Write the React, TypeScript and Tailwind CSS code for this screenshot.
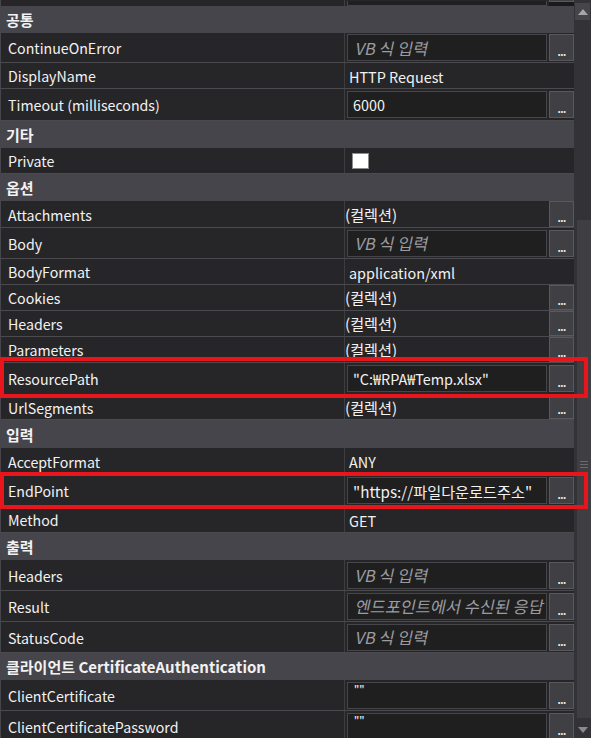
import React from "react";

type Value =
  | { type: "box"; text: string; placeholder?: boolean; small?: boolean; ko?: boolean }
  | { type: "text"; text: string }
  | { type: "collection" }
  | { type: "checkbox" };

type Row =
  | { kind: "header"; text: React.ReactNode; h: number }
  | { kind: "prop"; name: string; h: number; value: Value; button?: boolean };

const rows: Row[] = [
  { kind: "header", text: "공통", h: 27 },
  { kind: "prop", name: "ContinueOnError", h: 30, value: { type: "box", text: "VB 식 입력", placeholder: true }, button: true },
  { kind: "prop", name: "DisplayName", h: 26, value: { type: "text", text: "HTTP Request" } },
  { kind: "prop", name: "Timeout (milliseconds)", h: 32, value: { type: "box", text: "6000" }, button: true },
  { kind: "header", text: "기타", h: 27 },
  { kind: "prop", name: "Private", h: 26, value: { type: "checkbox" } },
  { kind: "header", text: "옵션", h: 27 },
  { kind: "prop", name: "Attachments", h: 27, value: { type: "collection" }, button: true },
  { kind: "prop", name: "Body", h: 31, value: { type: "box", text: "VB 식 입력", placeholder: true }, button: true },
  { kind: "prop", name: "BodyFormat", h: 26, value: { type: "text", text: "application/xml" } },
  { kind: "prop", name: "Cookies", h: 26, value: { type: "collection" }, button: true },
  { kind: "prop", name: "Headers", h: 26, value: { type: "collection" }, button: true },
  { kind: "prop", name: "Parameters", h: 26, value: { type: "collection" }, button: true },
  { kind: "prop", name: "ResourcePath", h: 32, value: { type: "box", text: "\"C:₩RPA₩Temp.xlsx\"" }, button: true },
  { kind: "prop", name: "UrlSegments", h: 25, value: { type: "collection" }, button: true },
  { kind: "header", text: "입력", h: 28 },
  { kind: "prop", name: "AcceptFormat", h: 27, value: { type: "text", text: "ANY" } },
  { kind: "prop", name: "EndPoint", h: 32, value: { type: "box", text: "\"https://파일다운로드주소\"", ko: true }, button: true },
  { kind: "prop", name: "Method", h: 26, value: { type: "text", text: "GET" } },
  { kind: "header", text: "출력", h: 27 },
  { kind: "prop", name: "Headers", h: 31, value: { type: "box", text: "VB 식 입력", placeholder: true }, button: true },
  { kind: "prop", name: "Result", h: 31, value: { type: "box", text: "엔드포인트에서 수신된 응답", placeholder: true }, button: true },
  { kind: "prop", name: "StatusCode", h: 31, value: { type: "box", text: "VB 식 입력", placeholder: true }, button: true },
  {
    kind: "header",
    text: (
      <>
        클라이언트 <span>CertificateAuthentication</span>
      </>
    ),
    h: 27,
  },
  { kind: "prop", name: "ClientCertificate", h: 31, value: { type: "box", text: "\"\"", small: true }, button: true },
  { kind: "prop", name: "ClientCertificatePassword", h: 31, value: { type: "box", text: "\"\"", small: true }, button: true },
];

function DotsButton({ full }: { full?: boolean }) {
  return (
    <div
      className={`w-[25px] shrink-0 bg-[#3f3f44] border border-[#58585d] flex items-end justify-center pb-[3px] ${
        full ? "self-stretch" : "h-[27px]"
      }`}
    >
      <span className="text-[10px] leading-none text-[#f0f0f0] font-bold tracking-[-0.5px]">...</span>
    </div>
  );
}

function ValueCell({ value, button }: { value: Value; button?: boolean }) {
  if (value.type === "text") {
    return (
      <div className="flex-1 flex items-center pl-[4px] text-[14.4px] text-[#f2f2f2] pt-[2px]">{value.text}</div>
    );
  }
  if (value.type === "checkbox") {
    return (
      <div className="flex-1 flex items-center pl-[7px]">
        <div className="w-[17px] h-[16px] bg-white border border-[#8c8c8c]" />
      </div>
    );
  }
  if (value.type === "collection") {
    return (
      <div className="flex-1 flex items-stretch">
        <div className="w-[204px] flex items-center text-[15.2px] text-[#f2f2f2] whitespace-nowrap overflow-hidden">
          (컬렉션)
        </div>
        <DotsButton full />
      </div>
    );
  }
  return (
    <div className="flex-1 flex items-center">
      <div
        className={`ml-[2px] w-[200px] h-[27px] bg-[#1f1f20] border border-[#46464a] flex overflow-hidden whitespace-nowrap ${
          value.small ? "items-start pt-[1px] pl-[6px]" : "items-center"
        } ${value.placeholder ? "pl-[8px]" : value.small ? "" : "pl-[5px]"}`}
      >
        {value.small ? (
          <span className="text-[9px] leading-none text-[#e0e0e0] font-bold">{value.text}</span>
        ) : value.placeholder ? (
          <span className="inline-block -skew-x-12 text-[16.4px] text-[#9c9ca0] pt-[1px]">{value.text}</span>
        ) : (
          <span className={`${value.ko ? "text-[15.2px]" : "text-[14.4px]"} text-[#f2f2f2] pt-[1px]`}>{value.text}</span>
        )}
      </div>
      {button && (
        <div className="ml-[2px] flex">
          <DotsButton />
        </div>
      )}
    </div>
  );
}

export default function App() {
  return (
    <div className="relative w-[591px] h-[738px] overflow-hidden bg-[#46454b] flex font-['Noto_Sans_CJK_KR',sans-serif]">
      <div className="w-[574px] flex flex-col pl-[1px] shrink-0">
        {/* partially visible row on top */}
        <div className="h-[6px] flex bg-[#262628] shrink-0">
          <div className="w-[344px] border-r border-[#3d3d41]" />
          <div className="flex-1 flex items-end">
            <div className="ml-[2px] w-[200px] h-[5px] bg-[#1f1f20] border-x border-b border-[#46464a]" />
            <div className="ml-[2px] w-[25px] h-[6px] flex flex-col">
              <div className="h-[2px] bg-[#3f3f44] border-x border-b border-[#58585d]" />
              <div className="flex-1 bg-[#1a1a1b]" />
            </div>
          </div>
        </div>
        {rows.map((r, i) =>
          r.kind === "header" ? (
            <div
              key={i}
              style={{ height: r.h }}
              className="shrink-0 flex items-center pl-[5px] pt-[2px] text-[15px] font-bold text-[#f2f2f2] bg-[#46454b]"
            >
              <span>{r.text}</span>
            </div>
          ) : (
            <div
              key={i}
              style={{ height: r.h }}
              className="shrink-0 flex bg-[#262628] border-b border-[#4a4a4f]"
            >
              <div className="w-[344px] shrink-0 border-r border-[#3d3d41] flex items-center pl-[7px] pt-[3px] text-[14.2px] text-[#f2f2f2] whitespace-nowrap">
                {r.name}
              </div>
              <ValueCell value={r.value} button={r.button} />
            </div>
          )
        )}
      </div>

      {/* scrollbar */}
      <div className="w-[17px] shrink-0 bg-[#333337] flex flex-col">
        <div className="h-[3px]" />
        <div className="h-[17px] mx-[1px] bg-[#45454a] flex items-center justify-center">
          <svg width="10" height="6" viewBox="0 0 10 6">
            <path d="M0 6 L5 0 L10 6 Z" fill="#a5a5aa" />
          </svg>
        </div>
        <div className="h-[200px]" />
        <div className="flex-1 ml-[3px] bg-[#3e3e43] flex items-center justify-center">
          <svg width="8" height="7" viewBox="0 0 8 7" className="mb-[10px]">
            <rect x="0" y="0" width="8" height="1" fill="#6a6a70" />
            <rect x="0" y="3" width="8" height="1" fill="#6a6a70" />
            <rect x="0" y="6" width="8" height="1" fill="#6a6a70" />
          </svg>
        </div>
        <div className="h-[20px] flex items-center justify-center pt-[4px]">
          <svg width="10" height="6" viewBox="0 0 10 6">
            <path d="M0 0 L10 0 L5 6 Z" fill="#8a8a8f" />
          </svg>
        </div>
      </div>

      {/* red annotation boxes */}
      <div className="absolute left-0 top-[357px] w-[588px] h-[41px] border-[4px] border-[#e8151c] pointer-events-none" />
      <div className="absolute left-0 top-[472px] w-[588px] h-[37px] border-[4px] border-[#e8151c] pointer-events-none" />
    </div>
  );
}
